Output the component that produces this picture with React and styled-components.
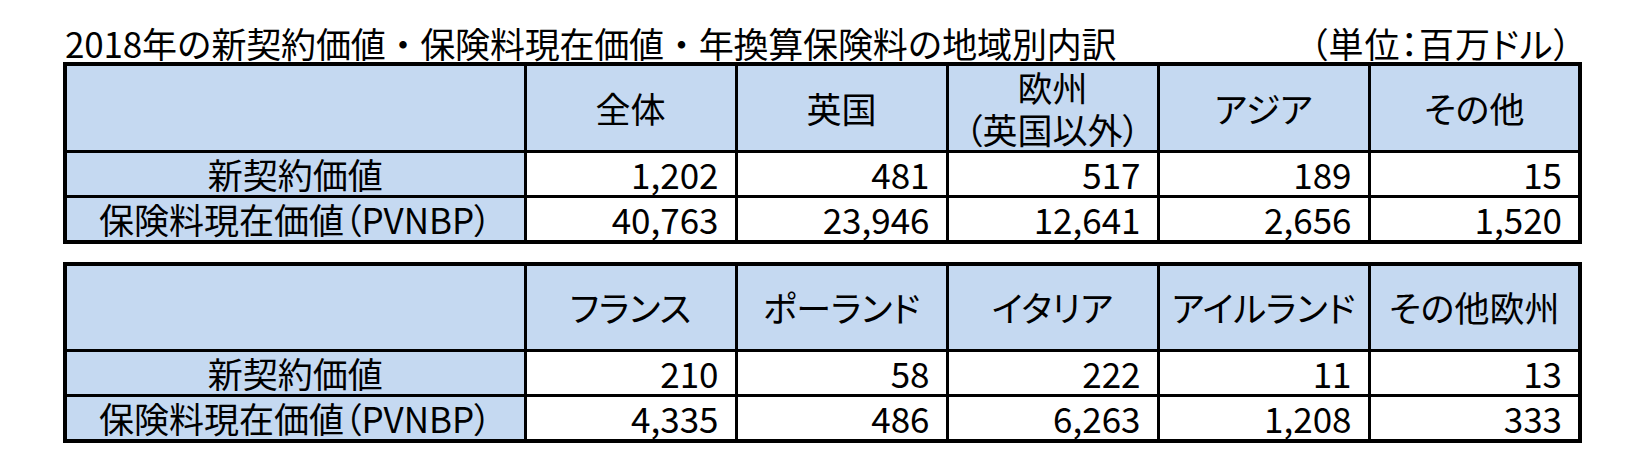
import React from 'react'
import styled, { createGlobalStyle } from 'styled-components'

const GlobalStyle = createGlobalStyle`
    html, body {
        margin: 0;
        padding: 0;
        background: #ffffff;
    }
    body {
        font-family: "Noto Sans CJK JP", "Noto Sans", sans-serif;
        font-feature-settings: "palt";
        color: #000000;
    }
`

const Page = styled.div`
    width: 1650px;
    height: 473px;
    padding: 24px 0 0 63px;
    box-sizing: border-box;
`

const Sheet = styled.div`
    width: 1515px;
    display: flex;
    flex-direction: column;
    gap: 18px;
`

const TitleRow = styled.div`
    display: flex;
    justify-content: space-between;
    align-items: flex-end;
    height: 38px;
    padding: 0 6px 0 2px;
    margin-bottom: -18px;
    font-size: 35px;
    line-height: 38px;
    white-space: nowrap;
`

// the title keeps full-width glyphs, the unit note is set proportionally
const Title = styled.span`
    font-feature-settings: normal;
    letter-spacing: -0.2px;
`

const Unit = styled.span`
    font-feature-settings: "palt";
    letter-spacing: 1px;
`

const Table = styled.table`
    width: 1515px;
    border-collapse: collapse;
    table-layout: fixed;
    border: 4px solid #000;
    font-size: 35px;
    line-height: 42px;
`

const HeadRow = styled.tr`
    height: 86px;
`

const DataRow = styled.tr`
    height: 44px;
`

const HeadCell = styled.th`
    background: #c5d9f1;
    border: 3px solid #000;
    font-weight: 400;
    text-align: center;
    vertical-align: middle;
    padding: 0;
    white-space: nowrap;
`

const LabelCell = styled.th`
    background: #c5d9f1;
    border: 3px solid #000;
    font-weight: 400;
    text-align: center;
    vertical-align: middle;
    padding: 0;
    white-space: nowrap;
`

const NumCell = styled.td`
    background: #ffffff;
    border: 3px solid #000;
    text-align: right;
    vertical-align: middle;
    padding: 0 16px 0 0;
    white-space: nowrap;
`

const tables = [
    {
        heads: ['全体', '英国', '欧州\n（英国以外）', 'アジア', 'その他'],
        rows: [
            ['新契約価値', ['1,202', '481', '517', '189', '15']],
            ['保険料現在価値（PVNBP）', ['40,763', '23,946', '12,641', '2,656', '1,520']],
        ],
    },
    {
        heads: ['フランス', 'ポーランド', 'イタリア', 'アイルランド', 'その他欧州'],
        rows: [
            ['新契約価値', ['210', '58', '222', '11', '13']],
            ['保険料現在価値（PVNBP）', ['4,335', '486', '6,263', '1,208', '333']],
        ],
    },
]

function RegionTable({ heads, rows }) {
    return (
        <Table>
            <colgroup>
                <col style={{ width: 460 }} />
                {heads.map((h, i) => <col key={i} style={{ width: 211 }} />)}
            </colgroup>
            <tbody>
                <HeadRow>
                    <HeadCell />
                    {heads.map(h => (
                        <HeadCell key={h}>
                            {h.split('\n').map((line, i) => <div key={i}>{line}</div>)}
                        </HeadCell>
                    ))}
                </HeadRow>
                {rows.map(([label, values]) => (
                    <DataRow key={label}>
                        <LabelCell scope="row">{label}</LabelCell>
                        {values.map((v, i) => <NumCell key={i}>{v}</NumCell>)}
                    </DataRow>
                ))}
            </tbody>
        </Table>
    )
}

export default function App() {
    return (
        <Page>
            <GlobalStyle />
            <Sheet>
                <TitleRow>
                    <Title>2018年の新契約価値・保険料現在価値・年換算保険料の地域別内訳</Title>
                    <Unit>（単位：百万ドル）</Unit>
                </TitleRow>
                {tables.map((t, i) => <RegionTable key={i} {...t} />)}
            </Sheet>
        </Page>
    )
}
